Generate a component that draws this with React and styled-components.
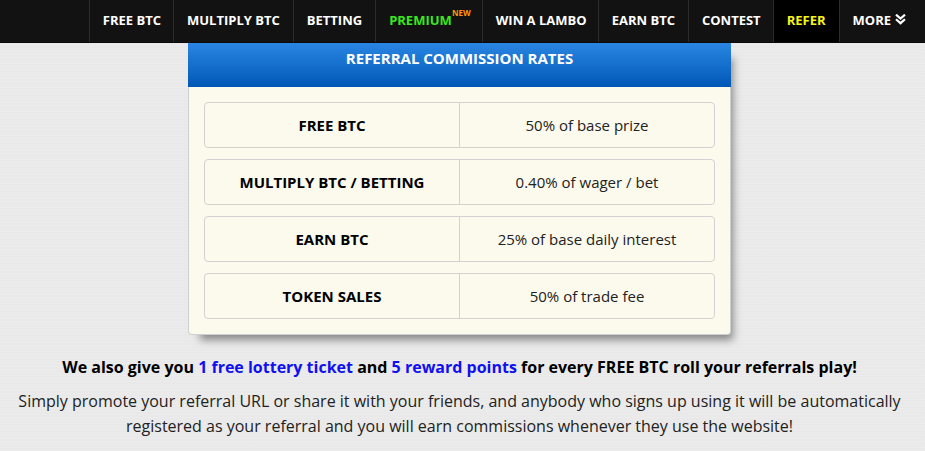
import React from 'react';
import styled, { createGlobalStyle } from 'styled-components';

const GlobalStyle = createGlobalStyle`
    html, body {
        margin: 0;
        padding: 0;
    }
    body {
        background: #e9e9e9;
        font-family: 'Open Sans', 'DejaVu Sans', sans-serif;
        color: #222;
        overflow: hidden;
    }
`;

const Page = styled.div`
    width: 925px;
    height: 451px;
    display: flex;
    flex-direction: column;
    align-items: center;
    background-color: #e9e9e9;
    background-image: repeating-linear-gradient(0deg, rgba(255,255,255,0.12) 0 1px, transparent 1px 3px);
`;

const NavBar = styled.nav`
    width: 100%;
    height: 43px;
    flex-shrink: 0;
    display: flex;
    justify-content: flex-end;
    background: #121212;
    border-bottom: 1px solid #0a0a0a;
    box-sizing: border-box;
`;

const NavItem = styled.a`
    display: flex;
    align-items: center;
    padding: 0 ${(props) => props.$padRight || 13}px 3px 13px;
    border-left: 1px solid #2c2c2c;
    background: ${(props) => props.$active ? '#000' : 'transparent'};
    color: ${(props) => props.$color || '#fff'};
    font-size: 13px;
    font-weight: 700;
    text-decoration: none;
    white-space: nowrap;
    position: relative;
`;

const NewTag = styled.sup`
    position: absolute;
    top: 7px;
    right: 11px;
    font-size: 8px;
    font-weight: 700;
    color: #ff9900;
`;

const ChevronIcon = styled.svg`
    margin-left: 4px;
    width: 11px;
    height: 11px;
`;

const Main = styled.div`
    width: 919px;
    display: flex;
    flex-direction: column;
    align-items: center;
    margin-right: 6px;
`;

const Card = styled.section`
    width: 543px;
    box-sizing: border-box;
    background: #fcfaed;
    border: 1px solid #cfcfcf;
    border-top: none;
    border-radius: 0 0 4px 4px;
    box-shadow: 7px 10px 8px -5px rgba(0, 0, 0, 0.42);
`;

const CardHeader = styled.div`
    height: 44px;
    margin: 0 -1px;
    padding-top: 4px;
    box-sizing: border-box;
    background: linear-gradient(to bottom, #2a86e2, #0058b6);
    color: #fff;
    font-size: 15px;
    font-weight: 700;
    line-height: 22px;
    text-align: center;
`;

const RateList = styled.div`
    display: flex;
    flex-direction: column;
    gap: 11px;
    padding: 15px;
`;

const RateRow = styled.div`
    display: grid;
    grid-template-columns: 254px 1fr;
    height: 46px;
    border: 1px solid #d2d2d2;
    border-radius: 4px;
    box-sizing: border-box;
`;

const RateCell = styled.div`
    display: flex;
    align-items: center;
    justify-content: center;
    font-size: 15px;
    font-weight: ${(props) => props.$bold ? 700 : 400};
    color: ${(props) => props.$bold ? '#000' : '#222'};
    border-left: ${(props) => props.$bold ? 'none' : '1px solid #d2d2d2'};
`;

const Lead = styled.p`
    margin: 20px 0 0;
    font-size: 16px;
    font-weight: 700;
    color: #000;
    line-height: 24px;
    text-align: center;
`;

const Highlight = styled.span`
    color: #1010f0;
`;

const Body = styled.p`
    width: 900px;
    margin: 10px 0 0;
    font-size: 16px;
    line-height: 25px;
    color: #222;
    text-align: center;
`;

const navItems = [
    { label: 'FREE BTC', padRight: 12 },
    { label: 'MULTIPLY BTC' },
    { label: 'BETTING' },
    { label: 'PREMIUM', color: '#3ae81e', badge: 'NEW', padRight: 30 },
    { label: 'WIN A LAMBO', padRight: 11 },
    { label: 'EARN BTC', padRight: 13 },
    { label: 'CONTEST', padRight: 12 },
    { label: 'REFER', color: '#f5f51e', active: true },
];

const rates = [
    ['FREE BTC', '50% of base prize'],
    ['MULTIPLY BTC / BETTING', '0.40% of wager / bet'],
    ['EARN BTC', '25% of base daily interest'],
    ['TOKEN SALES', '50% of trade fee'],
];

const App = () => {
    return (
        <Page>
            <GlobalStyle />
            <NavBar>
                {navItems.map((item) => (
                    <NavItem
                        key={item.label}
                        $color={item.color}
                        $active={item.active}
                        $padRight={item.padRight}
                    >
                        {item.label}
                        {item.badge && <NewTag>{item.badge}</NewTag>}
                    </NavItem>
                ))}
                <NavItem $padRight={19}>
                    MORE
                    <ChevronIcon viewBox="0 0 12 12" fill="none" stroke="#fff" strokeWidth="2.4" strokeLinecap="square">
                        <path d="M2 1.5 L6 5 L10 1.5" />
                        <path d="M2 6.5 L6 10 L10 6.5" />
                    </ChevronIcon>
                </NavItem>
            </NavBar>
            <Main>
                <Card>
                    <CardHeader>REFERRAL COMMISSION RATES</CardHeader>
                    <RateList>
                        {rates.map(([name, value]) => (
                            <RateRow key={name}>
                                <RateCell $bold>{name}</RateCell>
                                <RateCell>{value}</RateCell>
                            </RateRow>
                        ))}
                    </RateList>
                </Card>
                <Lead>
                    We also give you <Highlight>1 free lottery ticket</Highlight> and{' '}
                    <Highlight>5 reward points</Highlight> for every FREE BTC roll your referrals play!
                </Lead>
                <Body>
                    Simply promote your referral URL or share it with your friends, and anybody who signs up using it will be automatically registered as your referral and you will earn commissions whenever they use the website!
                </Body>
            </Main>
        </Page>
    );
};

export default App;
